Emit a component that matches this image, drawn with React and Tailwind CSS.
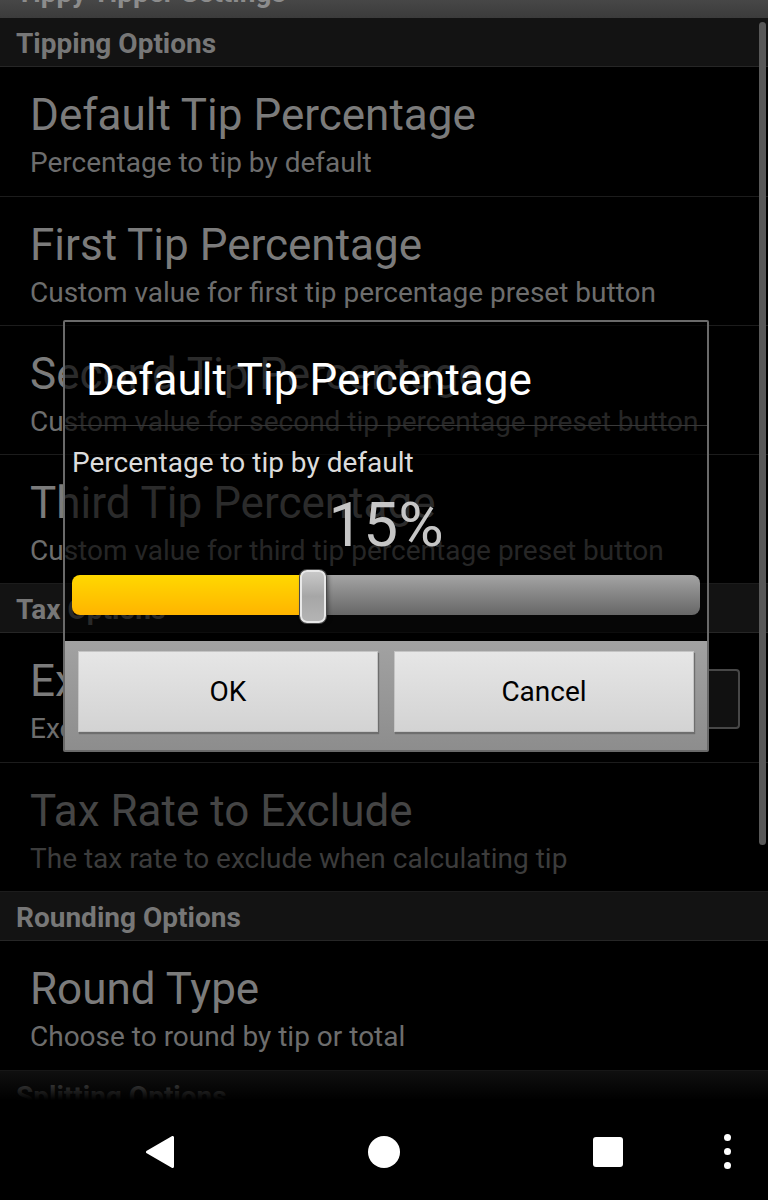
import React from "react";

function Header({ children }) {
  return (
    <div className="h-[49px] shrink-0 bg-[#131313] border-b border-[#262626] flex items-center pl-[16px] pt-[3px]">
      <span className="text-[28px] leading-[28px] font-bold text-[#777777]">{children}</span>
    </div>
  );
}

function Row({ h, title, summary, disabled, checkbox }) {
  return (
    <div className={`${h} shrink-0 border-b border-[#1c1c1c] flex items-start pl-[30px] pr-[28px]`}>
      <div className="flex-1 pt-[22px]">
        <div className={`text-[44px] leading-[52px] whitespace-nowrap ${disabled ? "text-[#454545]" : "text-[#7b7b7b]"}`}>{title}</div>
        <div className={`mt-[4px] text-[28px] leading-[36px] whitespace-nowrap ${disabled ? "text-[#3c3c3c]" : "text-[#6d6d6d]"}`}>{summary}</div>
      </div>
      {checkbox && (
        <div className="mt-[36px] w-[60px] h-[60px] shrink-0 rounded-[4px] border-2 border-[#474747] bg-[#111111]" />
      )}
    </div>
  );
}

export default function App() {
  return (
    <div className="relative w-[768px] h-[1200px] bg-black overflow-hidden font-['Roboto','Noto_Sans',sans-serif]">
      {/* action bar (mostly scrolled off) */}
      <div className="h-[18px] overflow-hidden bg-linear-to-b from-[#474747] to-[#3b3b3b]">
        <div className="pl-[16px] -mt-[21px] text-[28px] leading-[28px] font-bold text-[#8c8c8c] whitespace-nowrap">
          Tippy Tipper Settings
        </div>
      </div>

      {/* preference list */}
      <div className="relative h-[1082px] overflow-hidden flex flex-col">
        <Header>Tipping Options</Header>
        <Row h="h-[130px]" title="Default Tip Percentage" summary="Percentage to tip by default" />
        <Row h="h-[129px]" title="First Tip Percentage" summary="Custom value for first tip percentage preset button" />
        <Row h="h-[129px]" title="Second Tip Percentage" summary="Custom value for second tip percentage preset button" />
        <Row h="h-[129px]" title="Third Tip Percentage" summary="Custom value for third tip percentage preset button" />
        <Header>Tax Options</Header>
        <Row h="h-[130px]" title="Exclude Tax" summary="Exclude tax when calculating tip" checkbox />
        <Row h="h-[129px]" title="Tax Rate to Exclude" summary="The tax rate to exclude when calculating tip" disabled />
        <Header>Rounding Options</Header>
        <Row h="h-[130px]" title="Round Type" summary="Choose to round by tip or total" />
        <Header>Splitting Options</Header>
        <Row h="h-[129px]" title="Split Bill" summary="Split the bill between people" />

        {/* scrollbar */}
        <div className="absolute right-[2px] top-[4px] w-[7px] h-[823px] rounded-full bg-[#585858]" />
        {/* fade at bottom edge */}
        <div className="absolute inset-x-0 bottom-0 h-[36px] bg-linear-to-b from-transparent to-black" />
      </div>

      {/* navigation bar */}
      <div className="relative h-[100px] flex items-center pt-[4px]">
        <div className="w-[320px] flex justify-center">
          <svg width="28" height="32" viewBox="0 0 28 32">
            <path d="M26.5 1.5 L26.5 30.5 L1.5 16 Z" fill="white" stroke="white" strokeWidth="3" strokeLinejoin="round" />
          </svg>
        </div>
        <div className="w-[128px] flex justify-center">
          <div className="w-[32px] h-[32px] rounded-full bg-white" />
        </div>
        <div className="w-[320px] flex justify-center">
          <div className="w-[30px] h-[30px] rounded-[3px] bg-white" />
        </div>
        <div className="absolute right-[37px] top-[34px] flex flex-col gap-[7px]">
          <div className="w-[7px] h-[7px] rounded-full bg-white" />
          <div className="w-[7px] h-[7px] rounded-full bg-white" />
          <div className="w-[7px] h-[7px] rounded-full bg-white" />
        </div>
      </div>

      {/* dialog */}
      <div className="absolute left-[63px] top-[320px] w-[646px] h-[432px] border-2 border-[#6a6a6a] rounded-[2px] flex flex-col bg-black/65">
        <div className="h-[103px] shrink-0 pl-[21px] pt-[32px]">
          <div className="text-[44px] leading-[52px] text-white whitespace-nowrap">Default Tip Percentage</div>
        </div>
        <div className="h-px shrink-0 bg-[#3a3a3a]" />
        <div className="h-[215px] shrink-0 flex flex-col">
          <div className="pl-[7px] pt-[19px] text-[28px] leading-[36px] text-[#dcdcdc] whitespace-nowrap">
            Percentage to tip by default
          </div>
          <div className="mt-[12px] text-center text-[62px] leading-[64px] text-[#c6c6c6]">15%</div>
          <div className="mt-[18px] mx-[7px] relative h-[40px] rounded-[8px] flex overflow-visible">
            <div className="w-[241px] h-full rounded-l-[8px] bg-linear-to-b from-[#ffd800] to-[#ffb400]" />
            <div className="flex-1 h-full rounded-r-[8px] bg-linear-to-b from-[#a4a4a4] to-[#676767]" />
            <div className="absolute left-[228px] top-[-5px] w-[26px] h-[53px] rounded-[7px] border-2 border-[#e8e8e8] bg-linear-to-b from-[#c8c8c8] via-[#a6a6a6] to-[#b4b4b4] shadow-[0_0_0_1px_#4a4a4a,2px_0_4px_rgba(0,0,0,0.5)]" />
          </div>
        </div>
        <div className="flex-1 flex gap-[16px] px-[13px] pt-[10px] bg-linear-to-b from-[#a2a2a2] to-[#8d8d8d]">
          <div className="flex-1 h-[81px] flex items-center justify-center bg-linear-to-b from-[#e6e6e6] to-[#d3d3d3] border border-[#c4c4c4] shadow-[1px_2px_1px_#6e6e6e] text-[28px] text-black">
            OK
          </div>
          <div className="flex-1 h-[81px] flex items-center justify-center bg-linear-to-b from-[#e6e6e6] to-[#d3d3d3] border border-[#c4c4c4] shadow-[1px_2px_1px_#6e6e6e] text-[28px] text-black">
            Cancel
          </div>
        </div>
      </div>
    </div>
  );
}
